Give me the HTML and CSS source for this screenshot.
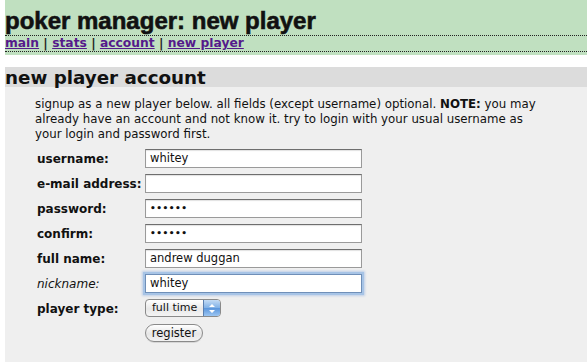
FILE: index.html
```html
<!DOCTYPE html>
<html>
<head>
<meta charset="utf-8">
<link rel="stylesheet" href="styles.css">
</head>
<body>
<div class="masthead">
  <h1 class="title">poker manager: new player</h1>
  <nav class="nav"><a href="#">main</a> | <a href="#">stats</a> | <a href="#">account</a> | <a href="#">new player</a></nav>
</div>
<div class="section">
  <h2 class="section-head">new player account</h2>
  <div class="section-body">
    <p class="intro"><span class="line">signup as a new player below. all fields (except username) optional. <strong class="note">NOTE:</strong> you may</span><span class="line">already have an account and not know it. try to login with your usual username as</span><span class="line">your login and password first.</span></p>
    <form class="form">
      <label class="lbl">username:</label><div class="field"><span class="input">whitey</span></div>
      <label class="lbl">e-mail address:</label><div class="field"><span class="input"></span></div>
      <label class="lbl">password:</label><div class="field"><span class="input dots">••••••</span></div>
      <label class="lbl">confirm:</label><div class="field"><span class="input dots">••••••</span></div>
      <label class="lbl">full name:</label><div class="field"><span class="input">andrew duggan</span></div>
      <label class="lbl opt">nickname:</label><div class="field"><span class="input focus">whitey</span></div>
      <label class="lbl">player type:</label><div class="field"><span class="select"><span class="sel-text">full time</span><span class="sel-arrows"><svg width="8" height="11" viewBox="0 0 8 11"><path d="M4 1 L7 4 H1 Z M4 10 L7 7 H1 Z" fill="#fff"/></svg></span></span></div>
      <span class="lbl"></span><div class="field"><span class="button">register</span></div>
    </form>
  </div>
</div>
</body>
</html>
```
FILE: styles.css
```css
html, body {
  margin: 0;
  padding: 0;
  background: #fff;
}
body {
  padding-left: 5px;
  font-family: "DejaVu Sans", Verdana, sans-serif;
  height: 362px;
  overflow: hidden;
}
.masthead {
  background: #c0e0c0;
  height: 55px;
  padding-top: 6px;
  box-sizing: border-box;
}
.title {
  margin: 0;
  font-family: "Liberation Sans", Arial, sans-serif;
  font-weight: bold;
  font-size: 24px;
  line-height: 28px;
  color: #111;
  -webkit-text-stroke: 0.6px #111;
  border-bottom: 1px dotted #222;
  height: 30px;
  box-sizing: border-box;
  padding-top: 1px;
}
.nav {
  font-weight: bold;
  font-size: 12.3px;
  line-height: 15px;
  color: #222;
  border-bottom: 1px dotted #222;
  height: 16px;
  box-sizing: border-box;
}
.nav a {
  color: #551a8b;
  text-decoration: underline;
}
.section {
  margin-top: 12px;
}
.section-head {
  margin: 0;
  background: #dcdcdc;
  font-size: 18.3px;
  font-weight: bold;
  color: #111;
  height: 20px;
  line-height: 21px;
}
.section-body {
  background: #efefef;
  height: 280px;
  padding-left: 30px;
  padding-top: 10px;
  box-sizing: border-box;
}
.intro {
  margin: 0;
  font-size: 11.8px;
  line-height: 15px;
  color: #111;
}
.line {
  display: block;
  white-space: nowrap;
}
.note {
  font-weight: bold;
}
.form {
  margin-top: 7px;
  display: grid;
  grid-template-columns: 108px 220px;
  grid-auto-rows: 20px;
  row-gap: 5px;
  padding-left: 2px;
}
.lbl {
  font-weight: bold;
  font-size: 12px;
  line-height: 20px;
  color: #111;
}
.lbl.opt {
  font-weight: normal;
  font-style: italic;
}
.field {
  display: flex;
  align-items: flex-start;
}
.input {
  display: block;
  box-sizing: border-box;
  width: 217px;
  height: 19px;
  background: #fff;
  border: 1px solid #9a9a9a;
  border-top-color: #6e6e6e;
  box-shadow: inset 0 1px 1px rgba(0,0,0,0.12);
  font-size: 11.5px;
  line-height: 17px;
  padding-left: 4px;
  color: #111;
}
.input.dots {
  font-size: 9px;
  letter-spacing: 0.5px;
  font-weight: bold;
}
.input.focus {
  border-color: #6f8fb8;
  box-shadow: 0 0 0 2px #a7c4e6, 0 0 2px 3px rgba(120,160,220,0.4);
}
.select {
  display: flex;
  align-items: stretch;
  box-sizing: border-box;
  height: 18px;
  width: 76px;
  border: 1px solid #8a8a8a;
  border-radius: 4px;
  background: linear-gradient(#ffffff, #e8e8e8 55%, #f4f4f4);
  overflow: hidden;
  font-size: 11px;
  color: #111;
}
.sel-text {
  flex: 1;
  padding-left: 6px;
  line-height: 16px;
  white-space: nowrap;
}
.sel-arrows {
  width: 16px;
  flex: none;
  display: flex;
  align-items: center;
  justify-content: center;
  background: linear-gradient(#c3dbf5, #7fb0e6 50%, #5a95dc 51%, #9cc6f2);
  border-left: 1px solid #5a7fb0;
}
.button {
  display: block;
  box-sizing: border-box;
  height: 18px;
  width: 58px;
  border: 1px solid #8a8a8a;
  border-radius: 9px;
  background: linear-gradient(#ffffff, #e6e6e6 55%, #f2f2f2);
  box-shadow: 0 1px 0 rgba(0,0,0,0.1);
  font-size: 11.5px;
  line-height: 16px;
  text-align: center;
  color: #111;
}
```
